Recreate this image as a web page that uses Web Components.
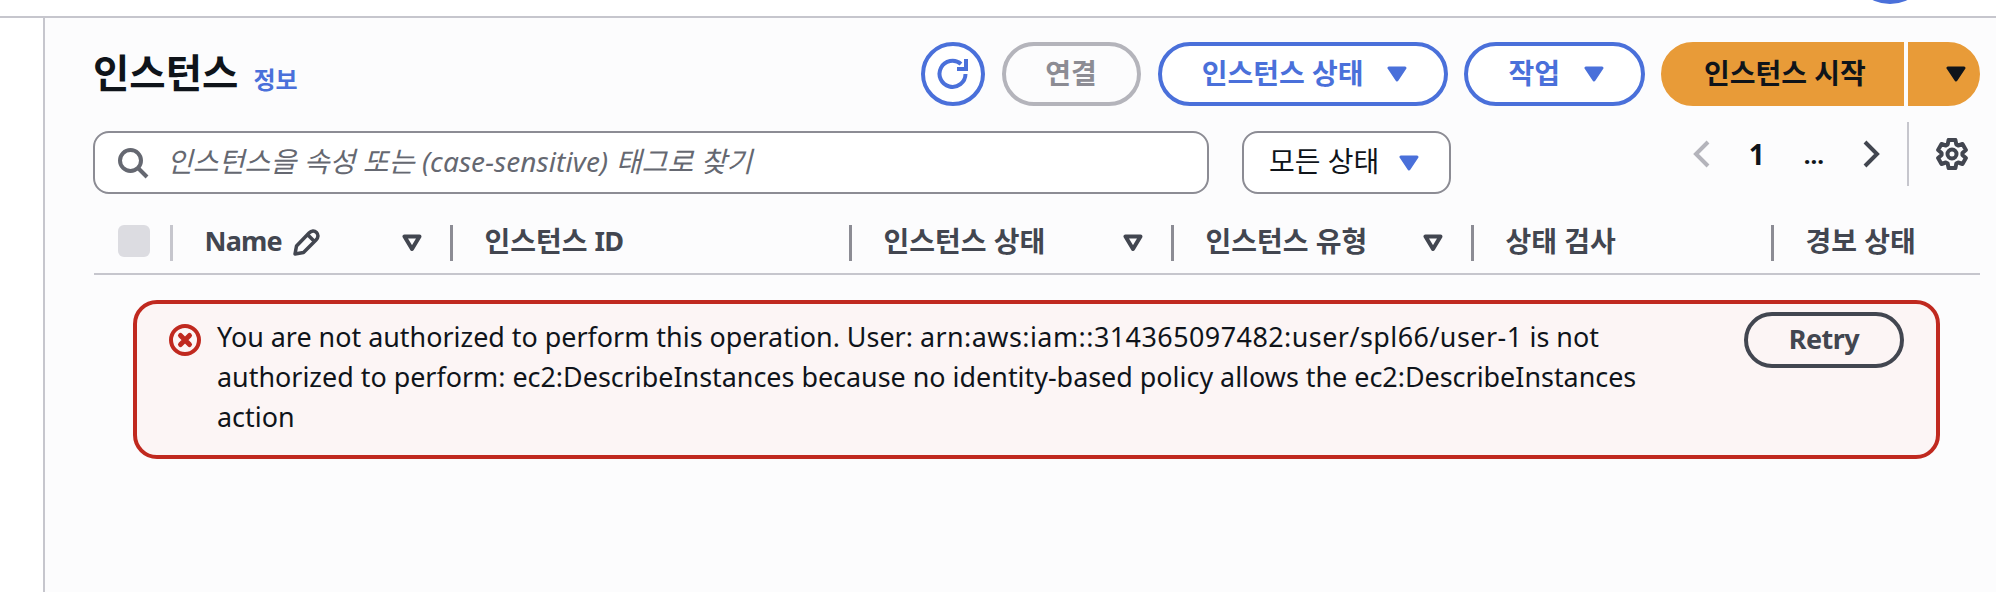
<!DOCTYPE html>
<html lang="ko">
<head>
<meta charset="utf-8">
<title>인스턴스</title>
<style>
  html, body { margin: 0; padding: 0; height: 100%; overflow: hidden; background: #fff; }
  body { font-family: "Noto Sans", "Noto Sans CJK KR", sans-serif; font-size: 28px; color: #0f141a; }
</style>
</head>
<body>
<console-frame>
  <instances-panel></instances-panel>
</console-frame>

<script>
const caret = (color) => `<svg width="20" height="16" viewBox="0 0 20 16"><path d="M2 2h16l-8 12z" fill="${color}" stroke="${color}" stroke-width="3" stroke-linejoin="round"/></svg>`;

// Top strip, left rail and the content area
class ConsoleFrame extends HTMLElement {
    constructor() {
        super();
        this.attachShadow({ mode: 'open' }).innerHTML = `
            <style>
                :host { display: flex; flex-direction: column; height: 592px; overflow: hidden; }
                .strip { height: 16px; flex: none; border-bottom: 2px solid #c6c6cd; position: relative; overflow: hidden; }
                .avatar { position: absolute; left: 1850px; top: -76px; width: 80px; height: 80px; border-radius: 50%; background: #4a70da; }
                .body { flex: 1; display: flex; }
                .rail { width: 43px; flex: none; border-right: 2px solid #c6c6cd; }
                .content { flex: 1; min-width: 0; background: #fcfcfd; padding: 24px 16px 0 48px; }
            </style>
            <div class="strip"><div class="avatar"></div></div>
            <div class="body">
                <div class="rail"></div>
                <div class="content"><slot></slot></div>
            </div>`;
    }
}
customElements.define('console-frame', ConsoleFrame);

class AwsButton extends HTMLElement {
    constructor() {
        super();
        this.attachShadow({ mode: 'open' }).innerHTML = `
            <style>
                :host { display: inline-flex; align-items: center; justify-content: center; gap: 24px; box-sizing: border-box;
                    height: 64px; padding: 0 40px; border: 4px solid #4a70da; border-radius: 32px; background: #fff;
                    color: #4a70da; font-weight: 700; font-size: 28px; white-space: nowrap; }
                :host([caret]) { padding-right: 37px; }
                :host([disabled]) { border-color: #b4b4bb; color: #8c8c94; background: #fcfcfd; width: 139px; padding: 0; }
                :host([icon]) { width: 64px; padding: 0; }
                :host([neutral]) { width: 160px; height: 56px; padding: 0; border-color: #424650; color: #424650; background: transparent;
                    font-size: 27px; letter-spacing: -0.5px; }
                :host([primary]) { background: #e89b38; border-color: #e89b38; color: #0f141a; }
                :host([start]) { border-radius: 32px 0 0 32px; width: 243px; padding: 0 35px 0 39px; justify-content: flex-start; }
                :host([end]) { border-radius: 0 32px 32px 0; padding: 0; width: 72px; }
                .label { margin-top: -4px; }
                .label:empty { display: none; }
                svg { display: block; }
            </style>
            <span class="label"><slot></slot></span>`;
        if (this.hasAttribute('caret')) {
            const wrap = document.createElement('span');
            wrap.innerHTML = caret(this.hasAttribute('primary') ? '#0f141a' : '#4a70da');
            this.shadowRoot.appendChild(wrap);
        }
    }
}
customElements.define('aws-button', AwsButton);

class ColHead extends HTMLElement {
    constructor() {
        super();
        this.attachShadow({ mode: 'open' }).innerHTML = `
            <style>
                :host { display: flex; align-items: center; box-sizing: border-box; height: 36px; padding-left: 32px; padding-right: 28px;
                    border-left: 3px solid #8c8c94; font-weight: 700; font-size: 28px; color: #424650; white-space: nowrap; }
                :host([light]) { border-left-color: #c6c6cd; }
                .t { display: flex; align-items: center; margin-top: -6px; }
                .sort { margin-left: auto; display: none; }
                :host([sortable]) .sort { display: block; }
            </style>
            <span class="t"><slot></slot></span>
            <svg class="sort" width="20" height="18" viewBox="0 0 20 18"><path d="M2.500 2.500h15L10 15z" fill="none" stroke="#424650" stroke-width="4" stroke-linejoin="round"/></svg>`;
    }
}
customElements.define('col-head', ColHead);

class TableHeader extends HTMLElement {
    constructor() {
        super();
        this.attachShadow({ mode: 'open' }).innerHTML = `
            <style>
                :host { display: grid; grid-template-columns: 75.500px 280px 399px 322px 300px 300px 209px; margin-left: 1px; padding-bottom: 12px; border-bottom: 2px solid #c6c6cd; }
                .check { padding-left: 24px; }
                .check i { display: block; width: 32px; height: 32px; border-radius: 6px; background: #dcdce1; }
                .lat { font-size: 27px; letter-spacing: -0.8px; }
                svg { margin: 6px 0 0 10px; }
            </style>
            <div class="check"><i></i></div>
            <col-head light sortable><span class="lat">Name</span><svg width="28" height="28" viewBox="0 0 28 28"><path d="M3 25 4.500 17 17 4C19.500 1.500 22.500 1.500 24.500 3.500 26.500 5.500 26.500 8.500 24 11L11.500 23.500ZM16 6l6 6" fill="none" stroke="#424650" stroke-width="3.500" stroke-linejoin="round"/></svg></col-head>
            <col-head>인스턴스 <span class="lat" style="margin-left:7px">ID</span></col-head>
            <col-head sortable>인스턴스 상태</col-head>
            <col-head sortable>인스턴스 유형</col-head>
            <col-head>상태 검사</col-head>
            <col-head>경보 상태</col-head>`;
    }
}
customElements.define('table-header', TableHeader);

class ErrorAlert extends HTMLElement {
    constructor() {
        super();
        this.attachShadow({ mode: 'open' }).innerHTML = `
            <style>
                :host { display: flex; align-items: flex-start; box-sizing: border-box; margin: 25px 40px 0 40px; padding: 8px 32px 0 32px;
                    min-height: 159px; border: 4px solid #c0291f; border-radius: 24px; background: #fcf5f5; }
                svg { flex: none; margin-top: 12px; }
                .text { flex: none; width: 1500px; margin-left: 16px; padding-top: 5px; font-size: 26.900px; line-height: 40px; color: #0f141a; }
                .action { margin-left: auto; }
            </style>
            <svg width="32" height="32" viewBox="0 0 32 32"><circle cx="16" cy="16" r="14" fill="none" stroke="#c0291f" stroke-width="4"/><path d="M11.500 11.500l9 9M20.500 11.500l-9 9" stroke="#c0291f" stroke-width="5" stroke-linecap="round"/></svg>
            <div class="text"><slot></slot></div>
            <div class="action"><slot name="action"></slot></div>`;
    }
}
customElements.define('error-alert', ErrorAlert);

class InstancesPanel extends HTMLElement {
    constructor() {
        super();
        // cog outline, 6 teeth
        let cog = '';
        for (let i = 0; i < 6; i++) {
            const a = (i * 60 - 90) * Math.PI / 180;
            const pt = (r, d) => [(16 + r * Math.cos(a + d)).toFixed(1), (16 + r * Math.sin(a + d)).toFixed(1)].join(' ');
            cog += `${i ? 'L' : 'M'}${pt(10.5, -0.42)} L${pt(14.5, -0.24)} L${pt(14.5, 0.24)} L${pt(10.5, 0.42)} `;
        }
        this.attachShadow({ mode: 'open' }).innerHTML = `
            <style>
                :host { display: block; }
                .top { display: flex; align-items: flex-start; height: 64px; }
                h1 { margin: 0; font-size: 39.500px; line-height: 62px; font-weight: 700; color: #0f141a; }
                .info { margin: 6px 0 0 15px; line-height: 64px; font-size: 24px; font-weight: 700; color: #4a70da; }
                .actions { margin-left: auto; display: flex; gap: 16px; }
                .actions .wide { margin-left: 1px; }
                .split { display: flex; gap: 4px; }
                .filters { display: flex; align-items: flex-start; margin-top: 25px; height: 63px; }
                .filters .txt { margin-top: -5px; }
                .search { box-sizing: border-box; width: 1116px; height: 63px; display: flex; align-items: center; padding-left: 22px; gap: 18px;
                    background: #fff; border: 2px solid #8c8c94; border-radius: 16px; font-style: italic; color: #656871; white-space: nowrap; letter-spacing: 0.1px; }
                .select { box-sizing: border-box; width: 209px; height: 63px; margin-left: 33px; display: flex; align-items: center; justify-content: space-between;
                    padding: 0 30px 0 25px; background: #fff; border: 2px solid #8c8c94; border-radius: 16px; color: #0f141a; white-space: nowrap; }
                .pager { margin-left: auto; margin-top: -9px; margin-right: 12px; height: 64px; display: flex; align-items: center; color: #0f141a; }
                .pager span { font-weight: 700; }
                .pager svg { display: block; }
                .num { margin: 0 39px 0 37px; }
                .dots { margin-right: 37px; font-size: 24px; }
                .divider { width: 2px; height: 64px; background: #c6c6cd; margin: 0 27px 0 26px; }
                table-header { margin-top: 31px; }
            </style>
            <div class="top">
                <h1>인스턴스</h1>
                <span class="info">정보</span>
                <div class="actions">
                    <aws-button icon><svg style="display:block;margin-top:4px" width="32" height="32" viewBox="0 0 32 32" fill="none" stroke="#4a70da" stroke-width="4"><path d="M28.500 16A13 13 0 1 1 24 6"/><path d="M29 1v10h-9"/></svg></aws-button>
                    <aws-button disabled class="wide">연결</aws-button>
                    <aws-button caret class="wide">인스턴스 상태</aws-button>
                    <aws-button caret>작업</aws-button>
                    <div class="split">
                        <aws-button primary start>인스턴스 시작</aws-button>
                        <aws-button primary end caret></aws-button>
                    </div>
                </div>
            </div>
            <div class="filters">
                <div class="search">
                    <svg width="32" height="32" viewBox="0 0 32 32" fill="none" stroke="#656871" stroke-width="4"><circle cx="13.500" cy="13.500" r="10.500"/><path d="M21 21l9 9"/></svg>
                    <span class="txt">인스턴스을 속성 또는 (case-sensitive) 태그로 찾기</span>
                </div>
                <div class="select"><span class="txt">모든 상태</span>${caret('#4a70da')}</div>
                <div class="pager">
                    <svg width="20" height="28" viewBox="0 0 20 28" fill="none" stroke="#b4b4bb" stroke-width="4"><path d="M16 2 4 14l12 12"/></svg>
                    <span class="num">1</span>
                    <span class="dots">...</span>
                    <svg width="20" height="28" viewBox="0 0 20 28" fill="none" stroke="#424650" stroke-width="4"><path d="M4 2l12 12L4 26"/></svg>
                    <div class="divider"></div>
                    <svg width="32" height="32" viewBox="0 0 32 32" fill="none" stroke="#424650" stroke-width="4" stroke-linejoin="round"><path d="${cog}Z"/><circle cx="16" cy="16" r="4.500"/></svg>
                </div>
            </div>
            <table-header></table-header>
            <error-alert>You are not authorized to perform this operation. User: <span style="letter-spacing:0.47px">arn:aws:iam::314365097482:user/spl66/user-1</span> is not<br>authorized to perform: ec2:DescribeInstances because no identity-based policy allows the ec2:DescribeInstances action<aws-button slot="action" neutral>Retry</aws-button></error-alert>`;
    }
}
customElements.define('instances-panel', InstancesPanel);
</script>
</body>
</html>
